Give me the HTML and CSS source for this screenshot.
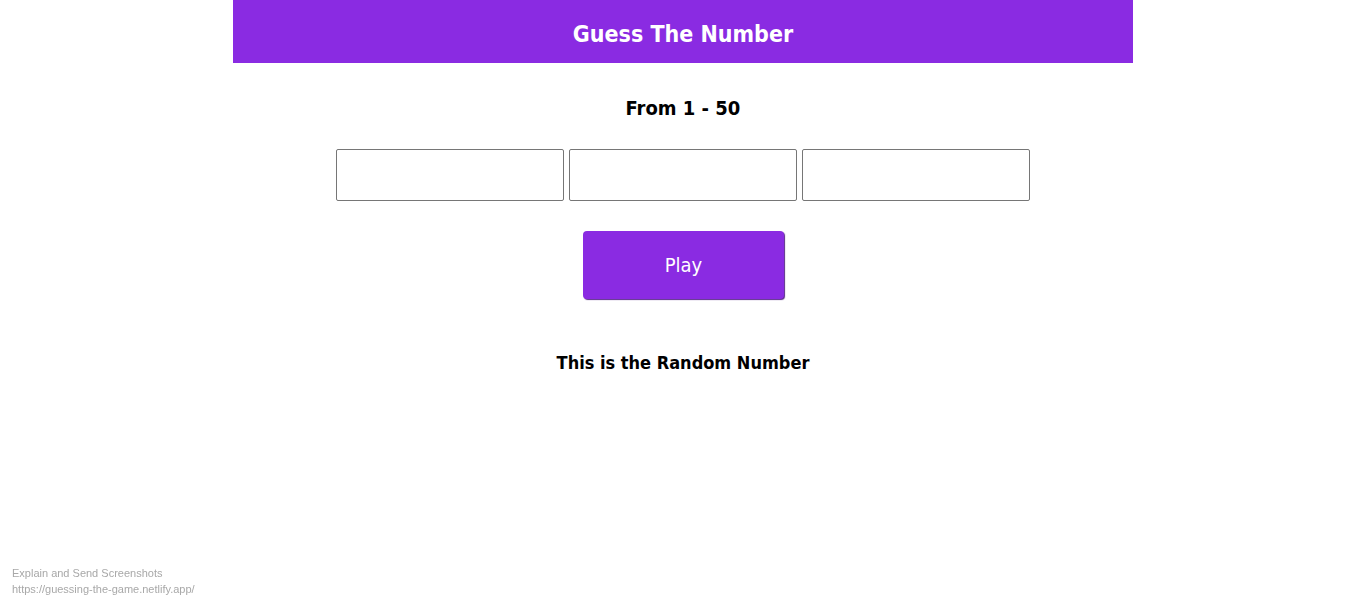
FILE: index.html
```html
<!DOCTYPE html>
<html>
<head>
<meta charset="utf-8">
<title>Guess The Number</title>
<link rel="stylesheet" href="styles.css">
</head>
<body>
<div class="wrap">
  <header class="header"><h1 class="title">Guess The Number</h1></header>
  <p class="range">From 1 - 50</p>
  <div class="inputs">
    <input class="box" type="text">
    <input class="box" type="text">
    <input class="box" type="text">
  </div>
  <div class="actions"><button class="play">Play</button></div>
  <p class="result">This is the Random Number</p>
</div>
<div class="overlay">
  <div>Explain and Send Screenshots</div>
  <div>https://guessing-the-game.netlify.app/</div>
</div>
</body>
</html>
```
FILE: styles.css
```css
html, body { margin: 0; padding: 0; background: #fff; }
body { font-family: "Comic Sans MS", "DejaVu Sans Condensed", "DejaVu Sans", sans-serif; }
.wrap { width: 900px; margin: 0 auto; text-align: center; }
.header { background: #8a2be2; height: 63px; display: flex; align-items: center; justify-content: center; }
.title { margin: 4px 0 0; color: #fff; font-size: 23px; font-weight: bold; font-family: "DejaVu Sans Condensed", "DejaVu Sans", sans-serif; line-height: 28px; }
.range { margin: 33px 0 0; font-size: 20px; font-weight: bold; line-height: 24px; font-family: "DejaVu Sans Condensed", "DejaVu Sans", sans-serif; }
.inputs { display: flex; justify-content: center; gap: 5px; margin-top: 29px; }
.box { width: 228px; height: 52px; box-sizing: border-box; border: 1px solid #767676; border-radius: 2px; padding: 0; margin: 0; }
.actions { margin-top: 30px; display: flex; justify-content: center; padding-left: 1px; }
.play { width: 201px; height: 68px; background: #8a2be2; color: #fff; border: none; border-radius: 4px; box-shadow: 1px 1px 1px #5a2a8a; font-size: 20px; font-family: "DejaVu Sans Condensed", "DejaVu Sans", sans-serif; cursor: pointer; padding: 0; }
.result { margin: 52px 0 0; font-size: 18px; font-weight: bold; line-height: 24px; font-family: "DejaVu Sans Condensed", "DejaVu Sans", sans-serif; }
.overlay { position: fixed; left: 12px; bottom: 10px; font-family: "Liberation Sans", Arial, sans-serif; font-size: 11px; line-height: 16px; color: #a8a8a8; }
```
